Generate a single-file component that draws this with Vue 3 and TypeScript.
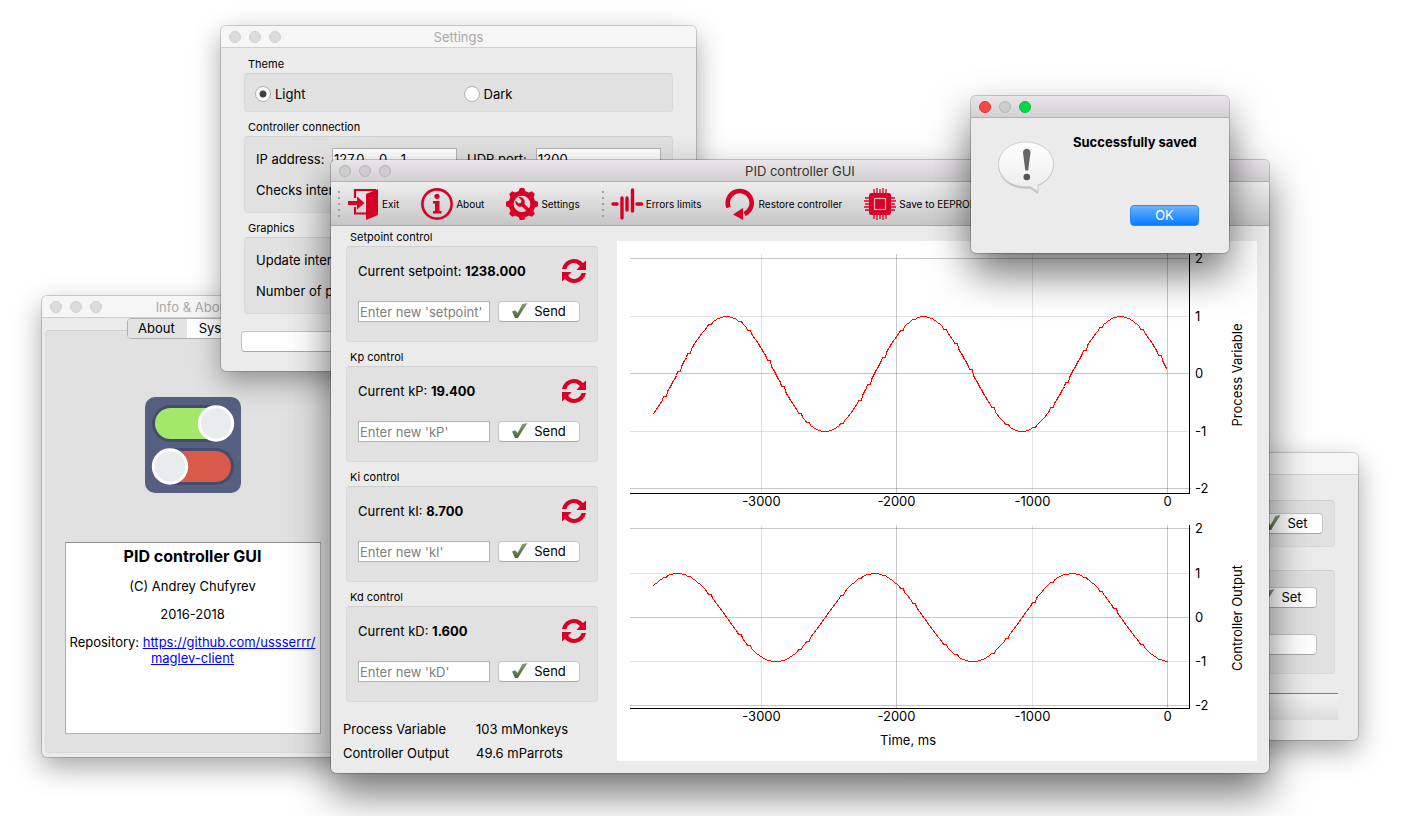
<script setup lang="ts">
import { reactive, ref } from 'vue'

interface Controller {
  id: string
  title: string
  label: string
  value: string
  hint: string
}

interface Plot {
  name: string
  top: number
  bottom: number
  rows: { y: number; value: number }[]
  middle: number
  path: string
}

const controllers: Controller[] = [
  { id: 'setpoint', title: 'Setpoint control', label: 'Current setpoint:', value: '1238.000', hint: "Enter new 'setpoint'" },
  { id: 'kp', title: 'Kp control', label: 'Current kP:', value: '19.400', hint: "Enter new 'kP'" },
  { id: 'ki', title: 'Ki control', label: 'Current kI:', value: '8.700', hint: "Enter new 'kI'" },
  { id: 'kd', title: 'Kd control', label: 'Current kD:', value: '1.600', hint: "Enter new 'kD'" },
]
const drafts = reactive<Record<string, string>>({ setpoint: '', kp: '', ki: '', kd: '' })
const theme = ref('light')
const ip = ref('127.0   .0   .1')
const port = ref('1200')

const columns = [
  { x: 144, value: -3000 },
  { x: 279, value: -2000 },
  { x: 415, value: -1000 },
  { x: 550, value: 0 },
]

const PERIOD = 197
const START = 35
const END = 550
const holds = [46, 60, 70, 91, 121, 130, 150, 164, 181, 189, 223, 241, 250, 265, 283, 295, 326, 337, 352, 374, 388, 415, 433, 448, 466, 482, 496, 523, 541]

function trace(middle: number, amplitude: number, peak: number): string {
  const points: string[] = []
  for (let x = START; x <= END; x += 1) {
    const hold = holds.find((h) => x >= h && x < h + 4)
    const at = hold === undefined ? x : hold + 1
    const y = middle - amplitude * Math.cos((2 * Math.PI * (at - peak)) / PERIOD)
    points.push(`${x} ${Math.round(y)}`)
  }
  return 'M' + points.join('L')
}

const plots: Plot[] = [
  {
    name: 'Process Variable',
    top: 13,
    bottom: 252,
    rows: [{ y: 17, value: 2 }, { y: 75, value: 1 }, { y: 132, value: 0 }, { y: 190, value: -1 }, { y: 247, value: -2 }],
    middle: 134,
    path: trace(132.5, 57.4, 109),
  },
  {
    name: 'Controller Output',
    top: 284,
    bottom: 467,
    rows: [{ y: 287, value: 2 }, { y: 332, value: 1 }, { y: 376, value: 0 }, { y: 420, value: -1 }, { y: 464, value: -2 }],
    middle: 377,
    path: trace(376, 44, 60),
  },
]
</script>

<template>
  <main class="desktop">
    <section class="window about-window">
      <header class="titlebar"><i class="light" /><i class="light" /><i class="light" /><h2>Info &amp; About</h2></header>
      <div class="about-body">
        <div class="tabs">
          <button type="button" class="tab current">About</button>
          <button type="button" class="tab">System</button>
        </div>
        <div class="pane">
          <svg class="logo" viewBox="0 0 96 96" aria-hidden="true">
            <rect width="96" height="96" rx="10" fill="#556080" />
            <rect x="7" y="8" width="82" height="37" rx="18.500" fill="#434c6d" />
            <rect x="10" y="11" width="76" height="31" rx="15.500" fill="#a4e869" />
            <circle cx="71" cy="26.500" r="16.700" fill="#e7eced" stroke="#fff" stroke-width="3" />
            <rect x="7" y="51" width="82" height="37" rx="18.500" fill="#434c6d" />
            <rect x="10" y="54" width="76" height="31" rx="15.500" fill="#d75a4a" />
            <circle cx="25" cy="69.500" r="16.700" fill="#e7eced" stroke="#fff" stroke-width="3" />
          </svg>
          <article class="info">
            <h3>PID controller GUI</h3>
            <p>(C) Andrey Chufyrev</p>
            <p>2016-2018</p>
            <p>Repository: <a href="https://github.com/ussserrr/maglev-client">https://github.com/ussserrr/<wbr>maglev-client</a></p>
          </article>
        </div>
      </div>
    </section>

    <section class="window settings-window">
      <header class="titlebar"><i class="light" /><i class="light" /><i class="light" /><h2>Settings</h2></header>
      <form class="settings-body" @submit.prevent>
        <h3 class="caption">Theme</h3>
        <div class="box themes">
          <label><input v-model="theme" type="radio" name="theme" value="light">Light</label>
          <label><input v-model="theme" type="radio" name="theme" value="dark">Dark</label>
        </div>
        <h3 class="caption">Controller connection</h3>
        <div class="box fields">
          <div class="field">
            <label for="ip">IP address:</label><input id="ip" v-model="ip" class="text" type="text">
            <label for="port" class="second">UDP port:</label><input id="port" v-model="port" class="text" type="text">
          </div>
          <div class="field"><label for="checks" class="long">Checks interval:</label><input id="checks" class="text" type="text"></div>
        </div>
        <h3 class="caption">Graphics</h3>
        <div class="box fields">
          <div class="field"><label for="update" class="long">Update interval:</label><input id="update" class="text" type="text"></div>
          <div class="field"><label for="count" class="long">Number of points:</label><input id="count" class="text" type="text"></div>
        </div>
        <button type="submit" class="push save" aria-label="Save settings" />
      </form>
    </section>

    <section class="window limits-window">
      <header class="titlebar" />
      <div class="limits-body">
        <div class="box limit-one">
          <button type="button" class="push set">
            <svg class="tick" viewBox="0 0 16 16" aria-hidden="true"><path d="M0 8.500L3.300 7.300L5.500 10L10.500 1L15.500 0L7.500 12.500L6 15H3Z" fill="url(#tick-fill)" /></svg>Set
          </button>
        </div>
        <div class="box limit-two">
          <button type="button" class="push set">
            <svg class="tick" viewBox="0 0 16 16" aria-hidden="true"><path d="M0 8.500L3.300 7.300L5.500 10L10.500 1L15.500 0L7.500 12.500L6 15H3Z" fill="url(#tick-fill)" /></svg>Set
          </button>
          <button type="button" class="push wide" aria-label="Restore limits" />
        </div>
        <div class="strip" />
      </div>
    </section>

    <section class="window main-window active">
      <header class="titlebar"><i class="light" /><i class="light" /><i class="light" /><h1>PID controller GUI</h1></header>
      <nav class="toolbar">
        <i class="grip" />
        <button type="button" class="tool">
          <svg viewBox="0 0 32 32" aria-hidden="true">
            <path d="M8 10V2H29M8 19V25.500H19" fill="none" stroke="#d80027" stroke-width="2.200" />
            <path d="M19 6L31 1V27L19 32Z" fill="#d80027" />
            <path d="M1 13H10V8.500L17.500 15L10 21.500V17H1Z" fill="#d80027" />
          </svg>Exit
        </button>
        <button type="button" class="tool">
          <svg viewBox="0 0 32 32" aria-hidden="true">
            <circle cx="16" cy="16" r="14.600" fill="none" stroke="#d80027" stroke-width="2.600" />
            <circle cx="16" cy="8.300" r="2.600" fill="#d80027" />
            <path d="M12 13H18.500V23H20.500V25.500H12V23H14V15.500H12Z" fill="#d80027" />
          </svg>About
        </button>
        <button type="button" class="tool">
          <svg viewBox="0 0 32 32" aria-hidden="true">
            <g fill="#d80027">
              <path v-for="a in 8" :key="a" d="M12 5L13.600 0.600Q13.800 0 14.400 0H17.600Q18.200 0 18.400 0.600L20 5Z" :transform="`rotate(${a * 45} 16 16)`" />
            </g>
            <circle cx="16" cy="16" r="10.800" fill="none" stroke="#d80027" stroke-width="5" />
            <path d="M9.500 12.500Q9 17 12.500 18.500Q14.500 19.200 16 18.500L20.500 23Q22 24 23 23T23 20.500L18.500 16Q19.500 12 16.500 9.800Q14.500 8.500 12.300 9.300L15.500 12.500L15 14.800L12.700 15.500Z" fill="#d80027" />
          </svg>Settings
        </button>
        <i class="grip" />
        <button type="button" class="tool">
          <svg viewBox="0 0 32 32" aria-hidden="true">
            <path d="M2 16H6M11 10V30M16 10V22M21.500 2V23M26 16H30.500" fill="none" stroke="#d80027" stroke-width="3.400" stroke-linecap="round" />
          </svg>Errors limits
        </button>
        <button type="button" class="tool">
          <svg viewBox="0 0 32 32" aria-hidden="true">
            <path d="M4.600 19.500A12 12 0 1 1 20.500 26" fill="none" stroke="#d80027" stroke-width="4.600" />
            <path d="M9 26.500L19 20V32Z" fill="#d80027" />
          </svg>Restore controller
        </button>
        <button type="button" class="tool">
          <svg viewBox="0 0 32 32" aria-hidden="true">
            <path d="M10 1V31M13 0V32M16 1V31M19 0V32M22 1V31M1 10H31M0 13H32M1 16H31M0 19H32M1 22H31" stroke="#d80027" stroke-width="1.300" />
            <rect x="5" y="5" width="22" height="22" rx="2.500" fill="#d80027" />
            <rect x="10.500" y="10.500" width="11" height="11" fill="none" stroke="#f0b0b8" stroke-width="1.200" />
          </svg>Save to EEPROM
        </button>
      </nav>
      <div class="main-body">
        <div class="side">
          <section v-for="c in controllers" :key="c.id" class="control">
            <h3 class="caption">{{ c.title }}</h3>
            <div class="box control-box">
              <div class="current">
                <span>{{ c.label }} <b>{{ c.value }}</b></span>
                <button type="button" class="refresh" :aria-label="'Refresh ' + c.id">
                  <svg viewBox="0 0 24 24" aria-hidden="true">
                    <path v-for="turn in [0, 180]" :key="turn" :transform="`rotate(${turn} 12 12)`" d="M0 10C1.500 3.500 6.500 0 12 0C15.500 0 18.500 1.500 21 4L24 1.500V11H14.500L17.800 7.200C16 5 14 4 12 4C8.500 4 5.500 6.500 4.500 10Z" fill="#d80027" />
                  </svg>
                </button>
              </div>
              <form class="entry" @submit.prevent>
                <input v-model="drafts[c.id]" class="text" type="text" :placeholder="c.hint" :aria-label="c.hint">
                <button type="submit" class="push send">
                  <svg class="tick" viewBox="0 0 16 16" aria-hidden="true"><path d="M0 8.500L3.300 7.300L5.500 10L10.500 1L15.500 0L7.500 12.500L6 15H3Z" fill="url(#tick-fill)" /></svg>Send
                </button>
              </form>
            </div>
          </section>
          <dl class="readouts">
            <dt>Process Variable</dt><dd>103 mMonkeys</dd>
            <dt>Controller Output</dt><dd>49.6 mParrots</dd>
          </dl>
        </div>
        <div class="chart">
          <svg viewBox="0 0 640 520" role="img" aria-label="Process variable and controller output over time">
            <defs>
              <linearGradient id="tick-fill" x1="0" y1="0" x2="0" y2="1">
                <stop offset="0" stop-color="#8a9a7c" /><stop offset="1" stop-color="#4c6b38" />
              </linearGradient>
            </defs>
            <g v-for="p in plots" :key="p.name">
              <g shape-rendering="crispEdges">
                <rect v-for="r in p.rows" :key="r.value" x="13" :y="r.y" width="561" height="1" fill="#000" :fill-opacity="r.value % 2 ? 0.11 : 0.22" />
                <rect v-for="c in columns" :key="c.value" :x="c.x" :y="p.top" width="1" :height="p.bottom - p.top" fill="#000" :fill-opacity="c.value % 2000 ? 0.11 : 0.22" />
                <rect x="13" :y="p.bottom" width="560" height="1" />
                <rect x="572" :y="p.top" width="1" :height="p.bottom - p.top" />
                <path :d="p.path" transform="translate(0.5 0.5)" fill="none" stroke="#f00" stroke-width="1" />
              </g>
              <text v-for="r in p.rows" :key="r.value" x="578" :y="r.y + 5">{{ r.value }}</text>
              <text v-for="c in columns" :key="c.value" :x="c.x + 0.5" :y="p.bottom + 13" text-anchor="middle">{{ c.value }}</text>
              <text :transform="`translate(625 ${p.middle}) rotate(-90)`" text-anchor="middle">{{ p.name }}</text>
            </g>
            <text x="291" y="504" text-anchor="middle">Time, ms</text>
          </svg>
        </div>
      </div>
    </section>

    <section class="window dialog active" role="alertdialog" aria-labelledby="dialog-text">
      <header class="titlebar"><i class="light red" /><i class="light" /><i class="light green" /></header>
      <div class="dialog-body">
        <svg class="bubble" viewBox="0 0 58 54" aria-hidden="true">
          <defs>
            <linearGradient id="bubble-fill" x1="0" y1="0" x2="0" y2="1">
              <stop offset="0" stop-color="#fff" /><stop offset="1" stop-color="#ececec" />
            </linearGradient>
          </defs>
          <path d="M29 1C44 1 56.500 10.500 56.500 23.500C56.500 32.500 50 40.500 41 44L41 52L33 46.500C15 48.500 1.500 37.500 1.500 23.500C1.500 10.500 14 1 29 1Z" fill="#999" opacity="0.5" transform="translate(0 1)" />
          <path d="M29 1C44 1 56.500 10.500 56.500 23.500C56.500 32.500 50 40.500 41 44L41 51L33 45.500C15 47.500 1.500 37 1.500 23.500C1.500 10.500 14 1 29 1Z" fill="url(#bubble-fill)" stroke="#c4c4c4" stroke-width="0.800" />
          <path d="M26 11.500C26 6.500 33.500 6.500 33.500 11.500L31.200 29.500H28.300Z" fill="#666" />
          <circle cx="29.800" cy="36" r="3.300" fill="#555" />
        </svg>
        <p id="dialog-text">Successfully saved</p>
        <button type="button" class="ok">OK</button>
      </div>
    </section>
  </main>
</template>

<style>
html,
body {
  margin: 0;
  background: #fff;
}
</style>

<style scoped>
.desktop {
  position: relative;
  min-height: 100vh;
  overflow: hidden;
  background: #fff;
  color: #000;
  font-family: Inter, "Liberation Sans", sans-serif;
  font-size: 13px;
  line-height: 16px;
}
.desktop * {
  box-sizing: border-box;
}
h1, h2, h3, p, dl, dd {
  margin: 0;
}
button, input {
  margin: 0;
  font: inherit;
  color: inherit;
}
.window {
  position: absolute;
  isolation: isolate;
  border-radius: 5px;
  background: #ebebeb;
  box-shadow: 0 0 0 1px rgba(0, 0, 0, 0.16), 0 10px 28px rgba(0, 0, 0, 0.36);
}
.window.active {
  box-shadow: 0 0 0 1px rgba(0, 0, 0, 0.2), 0 20px 40px rgba(0, 0, 0, 0.56);
}
.about-window { left: 42px; top: 296px; width: 303px; }
.settings-window { left: 221px; top: 26px; width: 475px; }
.limits-window { left: 900px; top: 453px; width: 458px; }
.main-window { left: 331px; top: 160px; width: 938px; }
.dialog { left: 971px; top: 96px; width: 258px; }

.titlebar {
  display: flex;
  align-items: center;
  gap: 8px;
  height: 22px;
  padding: 0 8px;
  border-bottom: 1px solid #d0d0d0;
  border-radius: 5px 5px 0 0;
  background: #f6f6f6;
}
.titlebar h1,
.titlebar h2 {
  flex: 1;
  margin-right: 60px;
  font-size: 13px;
  font-weight: 400;
  text-align: center;
  color: #a9a9a9;
}
.active .titlebar {
  border-color: #b1b1b1;
  background: linear-gradient(#e8e6e8, #d2d0d2);
}
.active .titlebar h1 {
  color: #333;
}
.light {
  width: 12px;
  height: 12px;
  border: 1px solid #d0d0d0;
  border-radius: 50%;
  background: #dcdcdc;
}
.active .light { border-color: #b5b5b5; background: #cdcdcd; }
.active .light.red { border-color: #e2302f; background: #ff4746; }
.active .light.green { border-color: #0bb93a; background: #00d844; }

.caption {
  margin-bottom: 2px;
  padding-left: 4px;
  font-size: 11px;
  line-height: 14px;
  font-weight: 400;
}
.box {
  border: 1px solid #dadada;
  border-top-color: #d0d0d0;
  border-radius: 4px;
  background: #e1e1e1;
}
.text {
  flex: 1;
  min-width: 0;
  height: 21px;
  padding: 0 1px;
  border: 1px solid #b4b4b4;
  border-radius: 0;
  outline: 0;
  background: #fff;
}
.text::placeholder {
  color: #808080;
  opacity: 1;
}
.push {
  display: flex;
  align-items: center;
  justify-content: center;
  height: 21px;
  padding: 0 0 1px;
  border: 1px solid #c4c4c4;
  border-bottom-color: #a8a8a8;
  border-radius: 4px;
  background: #fff;
}
.tick {
  width: 16px;
  height: 16px;
  margin-right: 6px;
}

.about-body {
  position: relative;
  padding: 12px 4px 4px 3px;
}
.tabs {
  position: absolute;
  z-index: 1;
  top: 0;
  left: 85px;
  display: flex;
  border: 1px solid #b0b0b0;
  border-radius: 4px;
  background: #fff;
  overflow: hidden;
}
.tab {
  height: 19px;
  padding: 0 12px 1px;
  border: 0;
  background: #fff;
}
.tab.current {
  padding: 0 12px 1px 10px;
  background: #e3e3e3;
}
.pane {
  display: flex;
  flex-direction: column;
  align-items: center;
  padding: 66px 19px 18px;
  border: 1px solid #dadada;
  border-top-color: #cfcfcf;
  border-radius: 4px;
  background: #e1e1e1;
}
.logo {
  width: 96px;
  height: 96px;
}
.info {
  align-self: stretch;
  min-height: 192px;
  margin-top: 49px;
  padding: 3px 4px 3px 3px;
  border: 1px solid #b0b0b0;
  border-top-color: #8c8c8c;
  background: #fff;
  text-align: center;
}
.info h3 {
  margin-bottom: 12px;
  font-size: 16px;
  line-height: 20px;
  font-weight: 700;
}
.info p {
  margin-bottom: 12px;
}
.info a {
  color: #00f;
}

.settings-body {
  padding: 9px 23px 19px;
}
.settings-body .box {
  margin-bottom: 8px;
}
.themes {
  display: grid;
  grid-template-columns: 1fr 1fr;
  column-gap: 10px;
  padding: 12px 10px 9px;
}
.themes label {
  display: flex;
  align-items: center;
  gap: 4px;
}
.themes input {
  appearance: none;
  width: 16px;
  height: 16px;
  border: 1px solid #b0b0b0;
  border-radius: 50%;
  background: #fff;
}
.themes input:checked {
  background: radial-gradient(circle, #404040 3px, #fff 4px);
}
.fields {
  display: grid;
  grid-template-columns: minmax(0, 1fr);
  gap: 10px;
  padding: 11px 11px 12px;
}
.field {
  display: flex;
  align-items: center;
}
.field label {
  width: 76px;
  white-space: nowrap;
}
.field .second {
  width: 79px;
  padding-left: 10px;
}
.field .long {
  width: 160px;
}
.save {
  width: calc(100% + 6px);
  margin: 17px -3px 0;
}

.limits-body {
  padding: 25px 20px 20px 23px;
}
.limit-one {
  margin-right: 3px;
  padding: 12px 11px;
}
.limit-two {
  margin: 23px 3px 19px 0;
  padding: 16px 17px 18px;
}
.set {
  width: 73px;
  margin-left: auto;
}
.wide {
  width: 100%;
  margin-top: 26px;
}
.strip {
  height: 27px;
  border-top: 1px solid #7c7c7c;
  background: linear-gradient(#f4f4f4, #dcdcdc);
}

.toolbar {
  display: flex;
  align-items: center;
  height: 44px;
  padding-left: 7px;
  border-bottom: 1px solid #a8a8a8;
  background: linear-gradient(#eeeeee, #c6c6c6);
}
.grip {
  width: 2px;
  height: 26px;
  margin-right: 7px;
  background: repeating-linear-gradient(#a0a0a0 0 2px, transparent 2px 6px);
}
.tool {
  display: flex;
  align-items: center;
  gap: 3px;
  margin-right: 22px;
  padding: 0;
  border: 0;
  background: none;
  font-size: 10px;
  white-space: nowrap;
}
.tool svg {
  width: 32px;
  height: 32px;
}
.main-body {
  display: flex;
  gap: 19px;
  padding: 4px 12px 12px;
}
.side {
  width: 255px;
}
.control {
  margin: 0 0 8px 3px;
}
.control-box {
  padding: 12px 11px 19px;
}
.current {
  display: flex;
  align-items: center;
  justify-content: space-between;
}
.refresh {
  display: flex;
  padding: 0;
  border: 0;
  background: none;
}
.refresh svg {
  width: 24px;
  height: 24px;
}
.entry {
  display: flex;
  gap: 8px;
  margin-top: 18px;
  padding-right: 6px;
}
.send {
  width: 82px;
}
.readouts {
  display: grid;
  grid-template-columns: 133px 1fr;
  row-gap: 8px;
  margin-top: 19px;
}
.chart {
  flex: 1;
  margin-top: 11px;
  background: #fff;
}
.chart svg {
  display: block;
  width: 100%;
}
.chart text {
  font-size: 13px;
}

.dialog-body {
  display: grid;
  grid-template-columns: 58px 1fr;
  column-gap: 18px;
  padding: 16px 30px 27px 26px;
}
.bubble {
  width: 58px;
  height: 54px;
  margin-top: 7px;
}
.dialog-body p {
  font-weight: 700;
  white-space: nowrap;
}
.ok {
  grid-column: 2;
  justify-self: end;
  width: 69px;
  height: 21px;
  margin-top: 10px;
  padding: 0 0 1px;
  border: 1px solid #2b88f5;
  border-radius: 4px;
  background: linear-gradient(#6cb3fa, #067bff);
  color: #fff;
}
</style>
